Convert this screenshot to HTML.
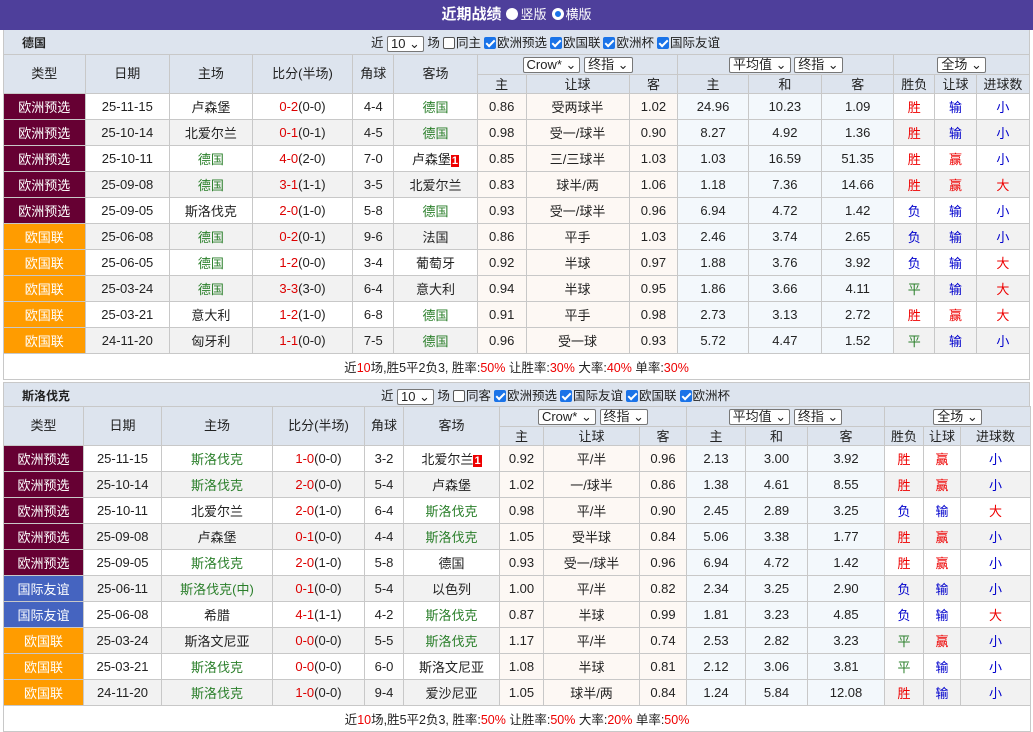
<!DOCTYPE html>
<html><head><meta charset="utf-8"><style>
*{margin:0;padding:0;box-sizing:border-box}
body{width:1033px;height:731px;overflow:hidden;background:#fff;font-family:"Liberation Sans","Noto Sans CJK SC",sans-serif;font-size:13px;color:#222}
.top{height:30px;background:#4e3f9b;color:#fff;text-align:center;line-height:30px;font-size:13px}
.top b{font-size:15px}
.rad{display:inline-block;width:12px;height:12px;border-radius:50%;background:#fff;vertical-align:-1px;margin:0 2px 0 5px}
.rad.on{border:3px solid #fff;background:#1a73e8;box-shadow:0 0 0 1px #1a73e8 inset}
.wrap{margin:0 3px;width:1027px}
.tt{height:24px;background:#dde4ee;position:relative;line-height:26px;border-left:1px solid #c8c8c8;border-right:1px solid #c8c8c8}
.tt .nm{position:absolute;left:18px;font-weight:bold;font-size:12px}
.tt .ct{position:absolute;top:0;font-size:12.5px;white-space:nowrap}
.sel{display:inline-block;border:1px solid #777;background:#fff;height:16px;line-height:14px;padding:0 3px;font-size:13px;vertical-align:middle;border-radius:2px}
.cb{display:inline-block;width:12px;height:12px;border:1px solid #555;border-radius:2px;background:#fff;vertical-align:-2px;margin:0 1px 0 3px}
.cb.on{background:#1a73e8;border-color:#1a73e8;position:relative}
.cb.on:after{content:"";position:absolute;left:3px;top:0px;width:3px;height:7px;border:solid #fff;border-width:0 2px 2px 0;transform:rotate(45deg)}
table{border-collapse:collapse;table-layout:fixed;width:1027px}
td{border:1px solid #c8c8c8;text-align:center;height:26px;font-size:13px;white-space:nowrap;overflow:hidden;padding:0}
tr.h td{background:#dde4ee;height:20px;font-size:13px;line-height:18px}
tr.h2 td{height:19px;line-height:17px}
tr.g td{background:#f2f2f2}
td.a{background:#fdf8f4!important}
td.b{background:#f3f8fc!important}
td.t{color:#fff!important}
td.eq{background:#660033!important}
td.en{background:#ff9c00!important}
td.fr{background:#4564c0!important}
.gr{color:#2a7f2a}.rd{color:#e00}.bl{color:#00c}.sc{color:#d00}
.n1{background:#e00;color:#fff;font-size:11px;padding:0 1px;font-weight:bold}
td.sum{height:26px;background:#fff;font-size:12.5px}
td.sum i{font-style:normal;color:#e00}
</style></head><body>
<div class="top"><b>近期战绩</b><span class="rad"></span>竖版<span class="rad on"></span>横版</div>
<div class="wrap">
<div class="tt"><span class="nm">德国</span><span class="ct" style="left:367px">近 <span class="sel">10 ⌄</span> 场<span class="cb"></span>同主<span class="cb on"></span>欧洲预选<span class="cb on"></span>欧国联<span class="cb on"></span>欧洲杯<span class="cb on"></span>国际友谊</span></div>
<table>
<colgroup><col style="width:80px"><col style="width:83px"><col style="width:81px"><col style="width:99px"><col style="width:40px"><col style="width:82px"><col style="width:48px"><col style="width:101px"><col style="width:48px"><col style="width:69px"><col style="width:72px"><col style="width:71px"><col style="width:40px"><col style="width:41px"><col style="width:52px"></colgroup>
<tr class="h"><td rowspan="2">类型</td><td rowspan="2">日期</td><td rowspan="2">主场</td><td rowspan="2">比分(半场)</td><td rowspan="2">角球</td><td rowspan="2">客场</td><td colspan="3"><span class="sel">Crow* ⌄</span> <span class="sel">终指 ⌄</span></td><td colspan="3"><span class="sel">平均值 ⌄</span> <span class="sel">终指 ⌄</span></td><td colspan="3"><span class="sel">全场 ⌄</span></td></tr>
<tr class="h h2"><td>主</td><td>让球</td><td>客</td><td>主</td><td>和</td><td>客</td><td>胜负</td><td>让球</td><td>进球数</td></tr>
<tr><td class="t eq">欧洲预选</td><td>25-11-15</td><td>卢森堡</td><td><span class="sc">0-2</span>(0-0)</td><td>4-4</td><td class="gr">德国</td><td class="a">0.86</td><td class="a">受两球半</td><td class="a">1.02</td><td class="b">24.96</td><td class="b">10.23</td><td class="b">1.09</td><td class="rd">胜</td><td class="bl">输</td><td class="bl">小</td></tr>
<tr class="g"><td class="t eq">欧洲预选</td><td>25-10-14</td><td>北爱尔兰</td><td><span class="sc">0-1</span>(0-1)</td><td>4-5</td><td class="gr">德国</td><td class="a">0.98</td><td class="a">受一/球半</td><td class="a">0.90</td><td class="b">8.27</td><td class="b">4.92</td><td class="b">1.36</td><td class="rd">胜</td><td class="bl">输</td><td class="bl">小</td></tr>
<tr><td class="t eq">欧洲预选</td><td>25-10-11</td><td class="gr">德国</td><td><span class="sc">4-0</span>(2-0)</td><td>7-0</td><td>卢森堡<span class="n1">1</span></td><td class="a">0.85</td><td class="a">三/三球半</td><td class="a">1.03</td><td class="b">1.03</td><td class="b">16.59</td><td class="b">51.35</td><td class="rd">胜</td><td class="rd">赢</td><td class="bl">小</td></tr>
<tr class="g"><td class="t eq">欧洲预选</td><td>25-09-08</td><td class="gr">德国</td><td><span class="sc">3-1</span>(1-1)</td><td>3-5</td><td>北爱尔兰</td><td class="a">0.83</td><td class="a">球半/两</td><td class="a">1.06</td><td class="b">1.18</td><td class="b">7.36</td><td class="b">14.66</td><td class="rd">胜</td><td class="rd">赢</td><td class="rd">大</td></tr>
<tr><td class="t eq">欧洲预选</td><td>25-09-05</td><td>斯洛伐克</td><td><span class="sc">2-0</span>(1-0)</td><td>5-8</td><td class="gr">德国</td><td class="a">0.93</td><td class="a">受一/球半</td><td class="a">0.96</td><td class="b">6.94</td><td class="b">4.72</td><td class="b">1.42</td><td class="bl">负</td><td class="bl">输</td><td class="bl">小</td></tr>
<tr class="g"><td class="t en">欧国联</td><td>25-06-08</td><td class="gr">德国</td><td><span class="sc">0-2</span>(0-1)</td><td>9-6</td><td>法国</td><td class="a">0.86</td><td class="a">平手</td><td class="a">1.03</td><td class="b">2.46</td><td class="b">3.74</td><td class="b">2.65</td><td class="bl">负</td><td class="bl">输</td><td class="bl">小</td></tr>
<tr><td class="t en">欧国联</td><td>25-06-05</td><td class="gr">德国</td><td><span class="sc">1-2</span>(0-0)</td><td>3-4</td><td>葡萄牙</td><td class="a">0.92</td><td class="a">半球</td><td class="a">0.97</td><td class="b">1.88</td><td class="b">3.76</td><td class="b">3.92</td><td class="bl">负</td><td class="bl">输</td><td class="rd">大</td></tr>
<tr class="g"><td class="t en">欧国联</td><td>25-03-24</td><td class="gr">德国</td><td><span class="sc">3-3</span>(3-0)</td><td>6-4</td><td>意大利</td><td class="a">0.94</td><td class="a">半球</td><td class="a">0.95</td><td class="b">1.86</td><td class="b">3.66</td><td class="b">4.11</td><td class="gr">平</td><td class="bl">输</td><td class="rd">大</td></tr>
<tr><td class="t en">欧国联</td><td>25-03-21</td><td>意大利</td><td><span class="sc">1-2</span>(1-0)</td><td>6-8</td><td class="gr">德国</td><td class="a">0.91</td><td class="a">平手</td><td class="a">0.98</td><td class="b">2.73</td><td class="b">3.13</td><td class="b">2.72</td><td class="rd">胜</td><td class="rd">赢</td><td class="rd">大</td></tr>
<tr class="g"><td class="t en">欧国联</td><td>24-11-20</td><td>匈牙利</td><td><span class="sc">1-1</span>(0-0)</td><td>7-5</td><td class="gr">德国</td><td class="a">0.96</td><td class="a">受一球</td><td class="a">0.93</td><td class="b">5.72</td><td class="b">4.47</td><td class="b">1.52</td><td class="gr">平</td><td class="bl">输</td><td class="bl">小</td></tr>
<tr><td class="sum" colspan="15">近<i>10</i>场,胜5平2负3, 胜率:<i>50%</i> 让胜率:<i>30%</i> 大率:<i>40%</i> 单率:<i>30%</i></td></tr>
</table>
<div style="height:2px"></div>
<div class="tt" style="border-top:1px solid #c8c8c8"><span class="nm">斯洛伐克</span><span class="ct" style="left:377px">近 <span class="sel">10 ⌄</span> 场<span class="cb"></span>同客<span class="cb on"></span>欧洲预选<span class="cb on"></span>国际友谊<span class="cb on"></span>欧国联<span class="cb on"></span>欧洲杯</span></div>
<table>
<colgroup><col style="width:80px"><col style="width:78px"><col style="width:111px"><col style="width:92px"><col style="width:39px"><col style="width:96px"><col style="width:44px"><col style="width:96px"><col style="width:47px"><col style="width:59px"><col style="width:62px"><col style="width:77px"><col style="width:39px"><col style="width:37px"><col style="width:70px"></colgroup>
<tr class="h"><td rowspan="2">类型</td><td rowspan="2">日期</td><td rowspan="2">主场</td><td rowspan="2">比分(半场)</td><td rowspan="2">角球</td><td rowspan="2">客场</td><td colspan="3"><span class="sel">Crow* ⌄</span> <span class="sel">终指 ⌄</span></td><td colspan="3"><span class="sel">平均值 ⌄</span> <span class="sel">终指 ⌄</span></td><td colspan="3"><span class="sel">全场 ⌄</span></td></tr>
<tr class="h h2"><td>主</td><td>让球</td><td>客</td><td>主</td><td>和</td><td>客</td><td>胜负</td><td>让球</td><td>进球数</td></tr>
<tr><td class="t eq">欧洲预选</td><td>25-11-15</td><td class="gr">斯洛伐克</td><td><span class="sc">1-0</span>(0-0)</td><td>3-2</td><td>北爱尔兰<span class="n1">1</span></td><td class="a">0.92</td><td class="a">平/半</td><td class="a">0.96</td><td class="b">2.13</td><td class="b">3.00</td><td class="b">3.92</td><td class="rd">胜</td><td class="rd">赢</td><td class="bl">小</td></tr>
<tr class="g"><td class="t eq">欧洲预选</td><td>25-10-14</td><td class="gr">斯洛伐克</td><td><span class="sc">2-0</span>(0-0)</td><td>5-4</td><td>卢森堡</td><td class="a">1.02</td><td class="a">一/球半</td><td class="a">0.86</td><td class="b">1.38</td><td class="b">4.61</td><td class="b">8.55</td><td class="rd">胜</td><td class="rd">赢</td><td class="bl">小</td></tr>
<tr><td class="t eq">欧洲预选</td><td>25-10-11</td><td>北爱尔兰</td><td><span class="sc">2-0</span>(1-0)</td><td>6-4</td><td class="gr">斯洛伐克</td><td class="a">0.98</td><td class="a">平/半</td><td class="a">0.90</td><td class="b">2.45</td><td class="b">2.89</td><td class="b">3.25</td><td class="bl">负</td><td class="bl">输</td><td class="rd">大</td></tr>
<tr class="g"><td class="t eq">欧洲预选</td><td>25-09-08</td><td>卢森堡</td><td><span class="sc">0-1</span>(0-0)</td><td>4-4</td><td class="gr">斯洛伐克</td><td class="a">1.05</td><td class="a">受半球</td><td class="a">0.84</td><td class="b">5.06</td><td class="b">3.38</td><td class="b">1.77</td><td class="rd">胜</td><td class="rd">赢</td><td class="bl">小</td></tr>
<tr><td class="t eq">欧洲预选</td><td>25-09-05</td><td class="gr">斯洛伐克</td><td><span class="sc">2-0</span>(1-0)</td><td>5-8</td><td>德国</td><td class="a">0.93</td><td class="a">受一/球半</td><td class="a">0.96</td><td class="b">6.94</td><td class="b">4.72</td><td class="b">1.42</td><td class="rd">胜</td><td class="rd">赢</td><td class="bl">小</td></tr>
<tr class="g"><td class="t fr">国际友谊</td><td>25-06-11</td><td class="gr">斯洛伐克(中)</td><td><span class="sc">0-1</span>(0-0)</td><td>5-4</td><td>以色列</td><td class="a">1.00</td><td class="a">平/半</td><td class="a">0.82</td><td class="b">2.34</td><td class="b">3.25</td><td class="b">2.90</td><td class="bl">负</td><td class="bl">输</td><td class="bl">小</td></tr>
<tr><td class="t fr">国际友谊</td><td>25-06-08</td><td>希腊</td><td><span class="sc">4-1</span>(1-1)</td><td>4-2</td><td class="gr">斯洛伐克</td><td class="a">0.87</td><td class="a">半球</td><td class="a">0.99</td><td class="b">1.81</td><td class="b">3.23</td><td class="b">4.85</td><td class="bl">负</td><td class="bl">输</td><td class="rd">大</td></tr>
<tr class="g"><td class="t en">欧国联</td><td>25-03-24</td><td>斯洛文尼亚</td><td><span class="sc">0-0</span>(0-0)</td><td>5-5</td><td class="gr">斯洛伐克</td><td class="a">1.17</td><td class="a">平/半</td><td class="a">0.74</td><td class="b">2.53</td><td class="b">2.82</td><td class="b">3.23</td><td class="gr">平</td><td class="rd">赢</td><td class="bl">小</td></tr>
<tr><td class="t en">欧国联</td><td>25-03-21</td><td class="gr">斯洛伐克</td><td><span class="sc">0-0</span>(0-0)</td><td>6-0</td><td>斯洛文尼亚</td><td class="a">1.08</td><td class="a">半球</td><td class="a">0.81</td><td class="b">2.12</td><td class="b">3.06</td><td class="b">3.81</td><td class="gr">平</td><td class="bl">输</td><td class="bl">小</td></tr>
<tr class="g"><td class="t en">欧国联</td><td>24-11-20</td><td class="gr">斯洛伐克</td><td><span class="sc">1-0</span>(0-0)</td><td>9-4</td><td>爱沙尼亚</td><td class="a">1.05</td><td class="a">球半/两</td><td class="a">0.84</td><td class="b">1.24</td><td class="b">5.84</td><td class="b">12.08</td><td class="rd">胜</td><td class="bl">输</td><td class="bl">小</td></tr>
<tr><td class="sum" colspan="15">近<i>10</i>场,胜5平2负3, 胜率:<i>50%</i> 让胜率:<i>50%</i> 大率:<i>20%</i> 单率:<i>50%</i></td></tr>
</table>
</div>
</body></html>
